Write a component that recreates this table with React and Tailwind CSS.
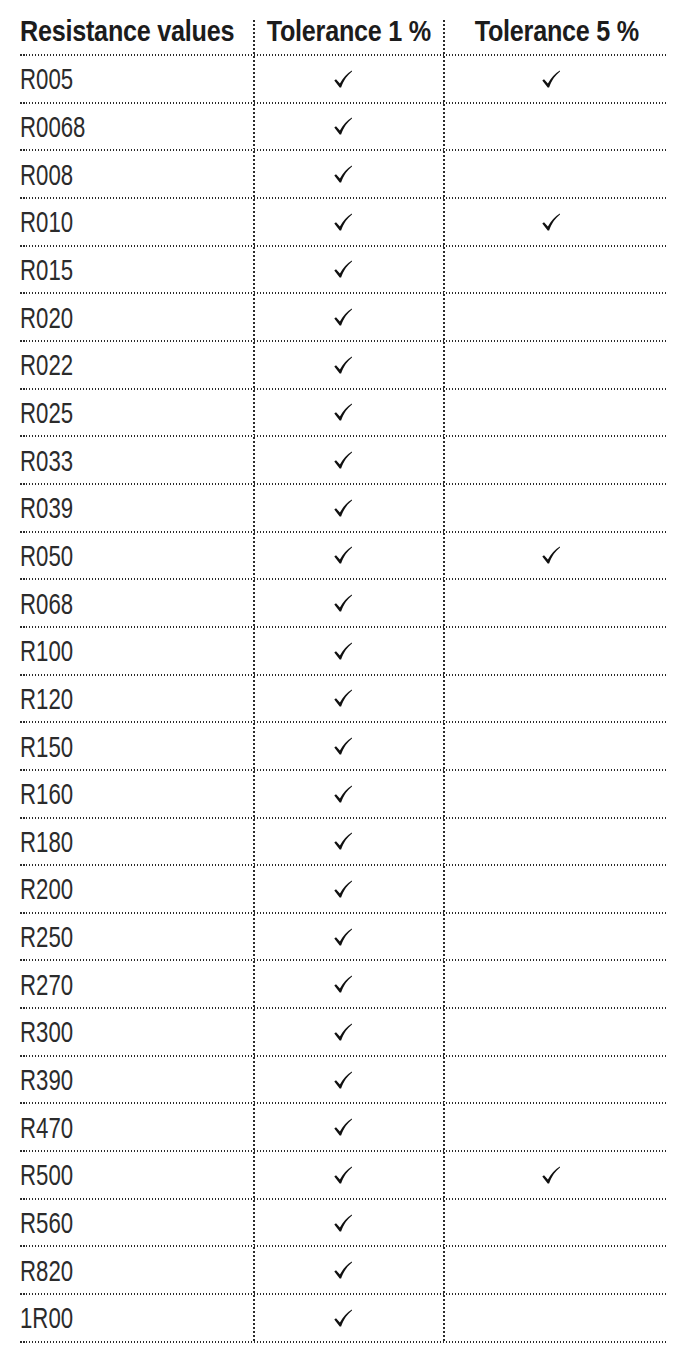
const rows = [
  ["R005", true, true],
  ["R0068", true, false],
  ["R008", true, false],
  ["R010", true, true],
  ["R015", true, false],
  ["R020", true, false],
  ["R022", true, false],
  ["R025", true, false],
  ["R033", true, false],
  ["R039", true, false],
  ["R050", true, true],
  ["R068", true, false],
  ["R100", true, false],
  ["R120", true, false],
  ["R150", true, false],
  ["R160", true, false],
  ["R180", true, false],
  ["R200", true, false],
  ["R250", true, false],
  ["R270", true, false],
  ["R300", true, false],
  ["R390", true, false],
  ["R470", true, false],
  ["R500", true, true],
  ["R560", true, false],
  ["R820", true, false],
  ["1R00", true, false],
];

const cols = "grid grid-cols-[233px_2px_188px_2px_223px]";

function HLine() {
  return (
    <div className="h-[2px] w-[648px] bg-[repeating-linear-gradient(to_right,#2a2a2a_0_1.5px,transparent_1.5px_3px)]" />
  );
}

function VLine() {
  return (
    <div className="w-[2px] bg-[repeating-linear-gradient(to_bottom,#2a2a2a_0_2px,transparent_2px_4px)]" />
  );
}

function Check() {
  return (
    <svg width="18" height="18" viewBox="0 0 18 18" className="text-[#111]">
      <path
        d="M0.3 10.4 L2 9.2 L5.9 13.4 C9 8 13 3.6 17.8 0.6 L18 1.5 C13.6 5 9.6 10.2 7.1 17.6 L5.7 17.6 Z"
        fill="currentColor"
      />
    </svg>
  );
}

export default function App() {
  return (
    <div className="min-h-[1364px] bg-white pl-[20px] pt-[20px] font-['Liberation_Sans','Arial',sans-serif] text-[#262626]">
      <div className="w-[648px]">
        <div className={`${cols} h-[34px]`}>
          <div className="-mt-[4px] whitespace-nowrap text-[30px] font-bold leading-[30px] tracking-[-0.3px] text-[#1c1c1c]">
            <span className="inline-block origin-left scale-x-[0.84]">Resistance values</span>
          </div>
          <VLine />
          <div className="-mt-[4px] flex justify-center whitespace-nowrap text-[30px] font-bold leading-[30px] tracking-[-0.3px] text-[#1c1c1c]">
            <span className="inline-block scale-x-[0.84]">Tolerance 1 %</span>
          </div>
          <VLine />
          <div className="-mt-[4px] flex justify-center whitespace-nowrap text-[30px] font-bold leading-[30px] tracking-[-0.3px] text-[#1c1c1c]">
            <span className="inline-block scale-x-[0.84]">Tolerance 5 %</span>
          </div>
        </div>
        {rows.map(([name, one, five]) => (
          <div key={name}>
            <HLine />
            <div className={`${cols} h-[45.67px]`}>
              <div className="flex items-center whitespace-nowrap pt-[1px] text-[30px] leading-none text-[#2b2b2b]">
                <span className="inline-block origin-left scale-x-[0.74]">{name}</span>
              </div>
              <VLine />
              <div className="flex items-center justify-center pr-[12px]">{one && <Check />}</div>
              <VLine />
              <div className="flex items-center justify-center pr-[12px]">{five && <Check />}</div>
            </div>
          </div>
        ))}
        <HLine />
      </div>
    </div>
  );
}
